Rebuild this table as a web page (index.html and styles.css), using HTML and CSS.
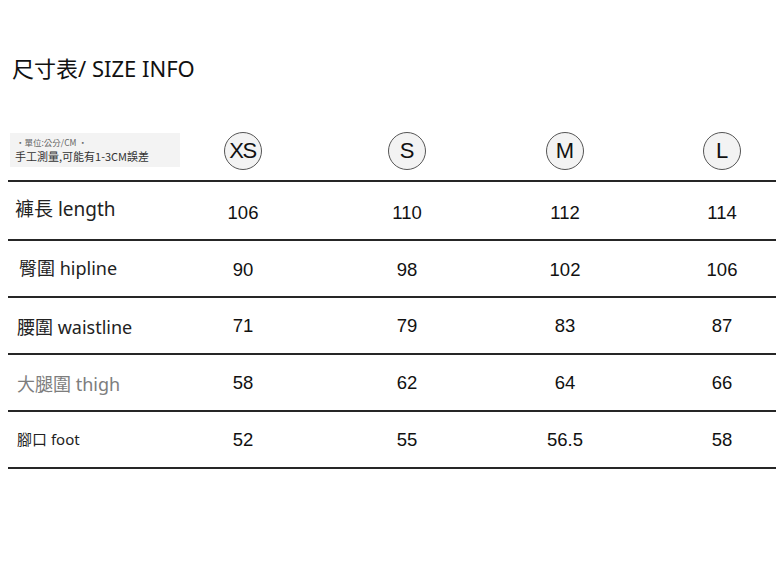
FILE: index.html
```
<!DOCTYPE html>
<html lang="zh-Hant">
<head>
<meta charset="utf-8">
<title>尺寸表</title>
<link rel="stylesheet" href="styles.css">
</head>
<body>
<div class="page">
  <h1 class="title">尺寸表/ SIZE INFO</h1>
  <div class="table">
    <div class="row head">
      <div class="note">
        <div class="note-1">・單位:公分/CM ・</div>
        <div class="note-2">手工測量,可能有1-3CM誤差</div>
      </div>
      <div class="cell"><span class="size xs">XS</span></div>
      <div class="cell"><span class="size">S</span></div>
      <div class="cell"><span class="size">M</span></div>
      <div class="cell"><span class="size">L</span></div>
    </div>
    <div class="row first">
      <div class="label l1">褲長 length</div>
      <div class="cell num n1">106</div>
      <div class="cell num n1">110</div>
      <div class="cell num n1">112</div>
      <div class="cell num n1">114</div>
    </div>
    <div class="row">
      <div class="label l2">臀圍 hipline</div>
      <div class="cell num n2">90</div>
      <div class="cell num n2">98</div>
      <div class="cell num n2">102</div>
      <div class="cell num n2">106</div>
    </div>
    <div class="row">
      <div class="label">腰圍 waistline</div>
      <div class="cell num">71</div>
      <div class="cell num">79</div>
      <div class="cell num">83</div>
      <div class="cell num">87</div>
    </div>
    <div class="row">
      <div class="label grey">大腿圍 thigh</div>
      <div class="cell num">58</div>
      <div class="cell num">62</div>
      <div class="cell num">64</div>
      <div class="cell num">66</div>
    </div>
    <div class="row last">
      <div class="label small">腳口 foot</div>
      <div class="cell num">52</div>
      <div class="cell num">55</div>
      <div class="cell num">56.5</div>
      <div class="cell num">58</div>
    </div>
  </div>
</div>
</body>
</html>
```
FILE: styles.css
```
* { box-sizing: border-box; }
html, body { margin: 0; padding: 0; background: #fff; }
body {
  width: 784px;
  height: 561px;
  overflow: hidden;
  font-family: "Noto Sans CJK TC", "Noto Sans", sans-serif;
  color: #1a1a1a;
}
.page { margin: 0 8px; }
.title {
  margin: 54px 0 0 4px;
  font-family: "Noto Sans", "Noto Sans CJK TC", sans-serif;
  font-size: 22px;
  line-height: 28px;
  font-weight: 400;
  color: #111;
}
.table { margin-top: 43px; }
.row {
  display: grid;
  grid-template-columns: 195px 164px 158px 157px 1fr;
  align-items: center;
  height: 57px;
  border-bottom: 2px solid #262626;
}
.row.head { height: 57px; }
.row.first { height: 59px; }
.cell {
  width: 80px;
  text-align: center;
  display: flex;
  justify-content: center;
}
.note {
  margin-left: 2px;
  width: 170px;
  height: 34px;
  background: #f3f3f3;
  padding: 4px 0 0 5px;
  margin-top: -5px;
}
.note-1 {
  font-size: 8.5px;
  line-height: 11px;
  color: #666;
  padding-left: 1px;
}
.note-2 {
  font-size: 11px;
  line-height: 15px;
  color: #333;
  margin-top: 1px;
}
.size {
  width: 38px;
  height: 38px;
  border-radius: 50%;
  border: 1.5px solid #555;
  background: #f3f3f3;
  display: flex;
  align-items: center;
  justify-content: center;
  font-family: "Liberation Sans", Arial, sans-serif;
  font-size: 22px;
  color: #111;
  margin-top: -3px;
}
.size.xs { letter-spacing: -1.5px; font-size: 22px; padding-right: 1px; }
.label {
  padding-left: 9px;
  font-family: "Noto Sans", "Noto Sans CJK TC", sans-serif;
  font-size: 18px;
  color: #222;
}
.label.l1 { font-size: 19px; padding-left: 7px; margin-top: -5px; }
.label.l2 { padding-left: 11px; margin-top: -4px; }
.label.grey { color: #7d7d7d; }
.label.small { font-size: 15px; margin-top: -2px; }
.num {
  font-family: "Liberation Sans", Arial, sans-serif;
  font-size: 18.5px;
  color: #111;
}
.num.n1 { margin-top: 5px; }
.num.n2 { margin-top: 3px; }
```
